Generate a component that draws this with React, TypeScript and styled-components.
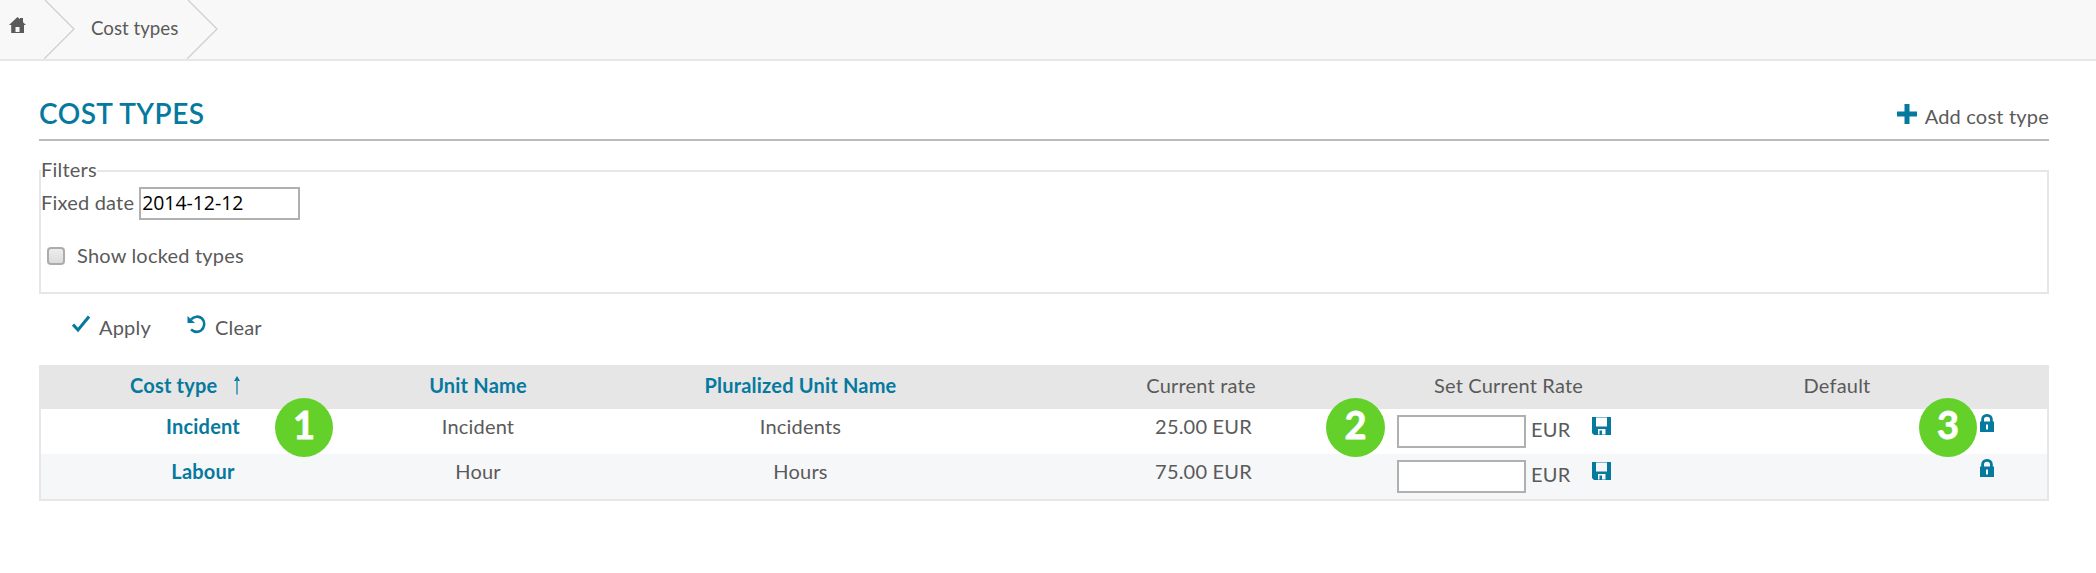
import React from "react";
import styled, { createGlobalStyle } from "styled-components";

const BLUE = "#06799f";
const TEXT = "#5a5a5a";

const GlobalStyle = createGlobalStyle`
  *, *::before, *::after { box-sizing: border-box; }
  body {
    margin: 0;
    background: #fff;
    color: ${TEXT};
    font: 20px/24px Lato, "Liberation Sans", sans-serif;
    letter-spacing: 0.2px;
    white-space: nowrap;
  }
  svg { display: block; flex: none; }
`;

const Page = styled.div`
  height: 573px;
  overflow: hidden;
`;

const Breadcrumb = styled.nav`
  display: flex;
  height: 61px;
  background: #f8f8f8;
  border-bottom: 2px solid #e7e7e7;
  font-size: 18.7px;
  letter-spacing: 0;
`;

const HomeLink = styled.a`
  width: 43px;
  padding: 17px 0 0 9px;
`;

const Crumb = styled.a`
  width: 111px;
  padding: 16px 0 0 16px;
`;

const Content = styled.main`
  padding: 35px 47px 0 39px;
`;

const TitleBar = styled.header`
  display: flex;
  justify-content: space-between;
  height: 45px;
  border-bottom: 2px solid #bbb;
`;

const Title = styled.h1`
  margin: 0;
  font-size: 28px;
  line-height: 34px;
  font-weight: 600;
  letter-spacing: 0.45px;
  color: ${BLUE};
`;

const AddLink = styled.a`
  display: flex;
  gap: 8px;
  padding-top: 8px;
`;

const Filters = styled.fieldset`
  margin: 15px 0 0;
  padding: 0;
  border: 2px solid #e7e7e7;
  min-width: 0;
  height: 138px;
`;

const Legend = styled.legend`
  padding: 0;
  height: 30px;
  line-height: 26px;
`;

const DateRow = styled.label`
  display: flex;
  align-items: center;
  gap: 5px;
  height: 34px;
`;

const LabelText = styled.span`
  padding-bottom: 3px;
`;

const DateInput = styled.input`
  width: 161px;
  height: 33px;
  padding: 0 1px 2px;
  border: 2px solid #b0b0b0;
  background: #fff;
  color: #000;
  font: 19.4px "Open Sans", sans-serif;
`;

const LockedRow = styled.label`
  display: flex;
  align-items: center;
  gap: 12px;
  margin: 23px 0 0 6px;
  height: 26px;
`;

const Checkbox = styled.input`
  appearance: none;
  width: 18px;
  height: 18px;
  margin: 0;
  border: 2px solid #acacac;
  border-radius: 4px;
  background: linear-gradient(#ededed, #dcdcdc);
`;

const Actions = styled.div`
  display: flex;
  gap: 36px;
  padding: 21px 0 0 33px;
  height: 71px;
`;

const Action = styled.a`
  display: flex;
  gap: 9px;
  line-height: 24px;
`;

const Table = styled.div`
  border: 2px solid #e6e7e8;
  border-top: 0;
`;

const Row = styled.div<{ $striped?: boolean }>`
  display: grid;
  grid-template-columns: 324px 226px 419px 387px 348px 184px 118px;
  height: 45px;
  padding-top: 5px;
  text-align: center;
  background: ${(p) => (p.$striped ? "#f6f7f9" : "#fff")};
`;

const HeadRow = styled(Row)`
  height: 44px;
  padding-top: 8px;
  background: #e6e6e6;
`;

const HeadCell = styled.div<{ $sortable?: boolean }>`
  font-weight: ${(p) => (p.$sortable ? 700 : 400)};
  color: ${(p) => (p.$sortable ? BLUE : TEXT)};
`;

const SortedCell = styled(HeadCell)`
  display: flex;
  gap: 16px;
  padding-left: 89px;
  svg { margin-top: 3px; }
`;

const CurrentHead = styled(HeadCell)`
  padding-right: 5px;
`;

const RateHead = styled(HeadCell)`
  text-align: left;
  padding-left: 37px;
`;

const Cell = styled.div``;

const NameCell = styled(Cell)`
  font-weight: 700;
  color: ${BLUE};
`;

const RateCell = styled.div`
  display: flex;
  text-align: left;
`;

const RateInput = styled.input`
  width: 129px;
  height: 33px;
  margin: 1px 5px 0 0;
  padding: 0 3px;
  border: 2px solid #b0b0b0;
  background: #fff;
`;

const Currency = styled.span`
  width: 61px;
  padding-top: 3px;
`;

const SaveButton = styled.a`
  padding-top: 3px;
`;

const LockCell = styled.div`
  display: flex;
  justify-content: center;
  padding: 0 2px 0 0;
`;

const Badge = styled.span<{ $x: number; $w: number }>`
  position: absolute;
  top: 398px;
  left: ${(p) => p.$x}px;
  width: ${(p) => p.$w}px;
  height: 59px;
  border-radius: 50%;
  background: #64d12b;
  color: #fff;
  font-size: 38px;
  font-weight: 700;
  line-height: 52px;
  letter-spacing: 0;
  text-align: center;
  -webkit-text-stroke: 0.8px #fff;
`;

const Separator = () => (
  <svg width="32" height="59" viewBox="0 0 32 59" fill="none" stroke="#cfcfcf" strokeWidth="1.3">
    <path d="M2 0L31 29L1 59" />
  </svg>
);

const HomeIcon = () => (
  <svg width="17" height="16" viewBox="0 0 17 16" fill={TEXT}>
    <path d="M0 8L8.5 0L11 2.3V1H14V5.2L17 8H15V16H10.5V10H6.5V16H2.2V8Z" />
    <path d="M6 15H11V16H6Z" />
  </svg>
);

const PlusIcon = () => (
  <svg width="20" height="20" viewBox="0 0 20 20" fill={BLUE}>
    <path d="M7.5 0H12.5V7.5H20V12.5H12.5V20H7.5V12.5H0V7.5H7.5Z" />
  </svg>
);

const CheckIcon = () => (
  <svg width="18" height="18" viewBox="0 0 18 18" fill="none" stroke={BLUE} strokeWidth="3">
    <path d="M1 9.5L6 15L17 1.5" />
  </svg>
);

const UndoIcon = () => (
  <svg width="19" height="19" viewBox="0 0 19 19">
    <path d="M4 4.5C7 1 12 .8 15 3.5C18.5 7 17.5 13 14 15.5C11 17.5 7 17 4 14.5" fill="none" stroke={BLUE} strokeWidth="2.6" />
    <path d="M.5 1V8H8Z" fill={BLUE} />
  </svg>
);

const SortIcon = () => (
  <svg width="8" height="19" viewBox="0 0 8 19">
    <path d="M4 0L7 5H1Z" fill={BLUE} />
    <path d="M4 4V18.5" stroke="#3d93b3" strokeWidth="1.6" />
  </svg>
);

const SaveIcon = () => (
  <svg width="19" height="18" viewBox="0 0 19 18" fill={BLUE} fillRule="evenodd">
    <path d="M0 0H19V18H2L0 16ZM4 0V9.5H15V0ZM6 12V17.5H13.5V12ZM7.5 13.5H10V17.5H7.5Z" />
    <path d="M4 0H15V1H4Z" opacity=".5" />
  </svg>
);

const LockIcon = () => (
  <svg width="14" height="18" viewBox="0 0 14 18">
    <path d="M2.6 9V5.5C2.6 0 11.4 0 11.4 5.5V9" fill="none" stroke={BLUE} strokeWidth="2.8" />
    <path d="M0 7.5H14V18H0ZM6 10.5V15.5H8V10.5Z" fill={BLUE} fillRule="evenodd" />
  </svg>
);

const costTypes = [
  { name: "Incident", unit: "Incident", plural: "Incidents", rate: "25.00 EUR" },
  { name: "Labour", unit: "Hour", plural: "Hours", rate: "75.00 EUR" },
];

const badges = [
  { label: "1", x: 275, w: 58 },
  { label: "2", x: 1326, w: 59 },
  { label: "3", x: 1919, w: 58 },
];

export default function App() {
  return (
    <Page>
      <GlobalStyle />
      <Breadcrumb>
        <HomeLink><HomeIcon /></HomeLink>
        <Separator />
        <Crumb>Cost types</Crumb>
        <Separator />
      </Breadcrumb>
      <Content>
        <TitleBar>
          <Title>COST TYPES</Title>
          <AddLink><PlusIcon />Add cost type</AddLink>
        </TitleBar>
        <Filters>
          <Legend>Filters</Legend>
          <DateRow>
            <LabelText>Fixed date</LabelText>
            <DateInput defaultValue="2014-12-12" />
          </DateRow>
          <LockedRow>
            <Checkbox type="checkbox" />
            <LabelText>Show locked types</LabelText>
          </LockedRow>
        </Filters>
        <Actions>
          <Action><CheckIcon />Apply</Action>
          <Action><UndoIcon />Clear</Action>
        </Actions>
        <Table>
          <HeadRow>
            <SortedCell $sortable>Cost type<SortIcon /></SortedCell>
            <HeadCell $sortable>Unit Name</HeadCell>
            <HeadCell $sortable>Pluralized Unit Name</HeadCell>
            <CurrentHead>Current rate</CurrentHead>
            <RateHead>Set Current Rate</RateHead>
            <HeadCell>Default</HeadCell>
          </HeadRow>
          {costTypes.map((c, i) => (
            <Row key={c.name} $striped={i % 2 === 1}>
              <NameCell>{c.name}</NameCell>
              <Cell>{c.unit}</Cell>
              <Cell>{c.plural}</Cell>
              <Cell>{c.rate}</Cell>
              <RateCell>
                <RateInput />
                <Currency>EUR</Currency>
                <SaveButton><SaveIcon /></SaveButton>
              </RateCell>
              <Cell />
              <LockCell><LockIcon /></LockCell>
            </Row>
          ))}
        </Table>
      </Content>
      {badges.map((b) => (
        <Badge key={b.label} $x={b.x} $w={b.w}>{b.label}</Badge>
      ))}
    </Page>
  );
}
